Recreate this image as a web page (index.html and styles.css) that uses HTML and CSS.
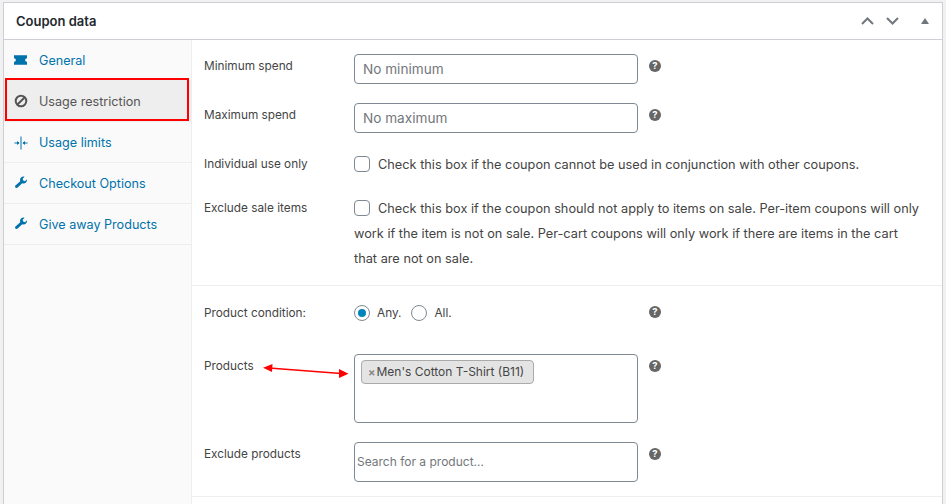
FILE: index.html
```html
<!DOCTYPE html>
<html lang="en">
<head>
    <meta charset="UTF-8">
    <title>Coupon data</title>
    <link rel="stylesheet" href="styles.css">
</head>
<body>
<div id="wrap">
    <div class="panel">
        <header class="panel-head">
            <h2>Coupon data</h2>
            <div class="head-icons">
                <svg width="13" height="8" viewBox="0 0 13 8"><path d="M1 7 L6.5 1.5 L12 7" fill="none" stroke="#72777c" stroke-width="2"/></svg>
                <svg width="13" height="8" viewBox="0 0 13 8"><path d="M1 1 L6.5 6.5 L12 1" fill="none" stroke="#72777c" stroke-width="2"/></svg>
                <svg class="tri" width="8" height="6" viewBox="0 0 8 6"><path d="M4 0 L8 6 L0 6 Z" fill="#72777c"/></svg>
            </div>
        </header>
        <div class="panel-body">
            <ul class="tabs">
                <li class="tab"><a href="#">
                    <svg class="ico-ticket" width="14" height="12" viewBox="0 0 14 12"><path d="M0 1 H14 V4 A2 2 0 0 0 14 8 V11 H0 V8 A2 2 0 0 0 0 4 Z" fill="#0073aa"/></svg>
                    General</a></li>
                <li class="tab active"><a href="#">
                    <svg class="ico-ban" width="14" height="14" viewBox="0 0 14 14"><circle cx="7" cy="7" r="5.3" fill="none" stroke="#555" stroke-width="2"/><path d="M3.2 10.8 L10.8 3.2" stroke="#555" stroke-width="2"/></svg>
                    Usage restriction</a></li>
                <li class="tab"><a href="#">
                    <svg width="14" height="14" viewBox="0 0 14 14"><path d="M7 0.5 V13.5" stroke="#0073aa" stroke-width="1"/><path d="M0.5 7 H5 M13.5 7 H9" stroke="#0073aa" stroke-width="1"/><path d="M5.5 7 L3 5 V9 Z M8.5 7 L11 5 V9 Z" fill="#0073aa"/></svg>
                    Usage limits</a></li>
                <li class="tab"><a href="#">
                    <svg class="ico-wrench" width="14" height="14" viewBox="0 0 14 14"><path d="M2 13 L1 12 L1.2 10.8 L6.2 6.2 C5.6 4.2 6.6 2 9.2 1.6 L10.6 1.8 L8.6 3.8 L9.2 5.6 L11 6.2 L13 4.2 C13.3 7.2 11 9 8.2 8.2 L3.4 12.8 Z" fill="#0073aa"/></svg>
                    Checkout Options</a></li>
                <li class="tab"><a href="#">
                    <svg class="ico-wrench" width="14" height="14" viewBox="0 0 14 14"><path d="M2 13 L1 12 L1.2 10.8 L6.2 6.2 C5.6 4.2 6.6 2 9.2 1.6 L10.6 1.8 L8.6 3.8 L9.2 5.6 L11 6.2 L13 4.2 C13.3 7.2 11 9 8.2 8.2 L3.4 12.8 Z" fill="#0073aa"/></svg>
                    Give away Products</a></li>
            </ul>
            <div class="tab-box"></div>

            <div class="content">
                <section class="group group-one">
                    <div class="row row-input">
                        <label>Minimum spend</label>
                        <div class="field"><input type="text" placeholder="No minimum"></div>
                        <span class="help">?</span>
                    </div>
                    <div class="row row-input">
                        <label>Maximum spend</label>
                        <div class="field"><input type="text" placeholder="No maximum"></div>
                        <span class="help">?</span>
                    </div>
                    <div class="row row-check">
                        <label>Individual use only</label>
                        <div class="check-text"><span class="check"></span>Check this box if the coupon cannot be used in conjunction with other coupons.</div>
                    </div>
                    <div class="row row-check row-long">
                        <label>Exclude sale items</label>
                        <div class="check-text"><span class="check"></span>Check this box if the coupon should not apply to items on sale. Per-item coupons will only work if the item is not on sale. Per-cart coupons will only work if there are items in the cart that are not on sale.</div>
                    </div>
                </section>

                <section class="group group-two">
                    <div class="row row-radio">
                        <label>Product condition:</label>
                        <div class="field radios">
                            <span class="radio on"></span><span class="radio-text">Any.</span>
                            <span class="radio"></span><span class="radio-text">All.</span>
                        </div>
                        <span class="help">?</span>
                    </div>
                    <div class="row row-products">
                        <label>Products</label>
                        <div class="field multi"><span class="chip"><b>×</b>Men's Cotton T-Shirt (B11)</span></div>
                        <span class="help">?</span>
                    </div>
                    <div class="row row-exclude">
                        <label>Exclude products</label>
                        <div class="field"><input class="search" type="text" placeholder="Search for a product…"></div>
                        <span class="help">?</span>
                    </div>
                </section>
            </div>
            <!-- red arrow over the form -->
            <svg class="arrow" width="86" height="16" viewBox="0 0 86 16"><path d="M6 5 L78 10.5" stroke="#f00" stroke-width="1.7"/><path d="M0 4.7 L9.5 1 L9 9 Z M85.5 10.7 L76 6 L76 15 Z" fill="#f00"/></svg>
        </div>
    </div>
</div>
</body>
</html>
```

FILE: styles.css
```css
* {margin: 0; padding: 0; box-sizing: border-box;}
li {list-style: none;}
a {text-decoration: none;}

body {background-color: #f1f1f1; font-family: "Inter", "Liberation Sans", sans-serif; font-size: 12px; color: #444;}

#wrap {width: 946px; height: 504px; padding: 2px 3px 0 3px; overflow: hidden;}

.panel {width: 940px; height: 520px; background-color: #fff; border: 1px solid #ccd0d4;}

.panel-head {height: 37px; display: flex; justify-content: space-between; align-items: center;
    padding: 0 13px 0 12px; border-bottom: 1px solid #ccd0d4;}
.panel-head h2 {font-size: 13px; font-weight: 600; color: #23282d;}
.head-icons {display: flex; align-items: center; gap: 12px; margin-top: -1px;}
.head-icons .tri {margin-left: 10px;}

.panel-body {display: flex; position: relative; height: 480px;}

/* left tabs */
.tabs {width: 188px; flex-shrink: 0; background-color: #fafafa; border-right: 1px solid #eee;}
.tab {height: 41px; border-bottom: 1px solid #eee;}
.tab a {display: flex; align-items: center; gap: 11px; height: 40px; padding: 2px 0 0 10px; color: #0073aa;
    font-size: 12.6px; line-height: 1;}
.tab svg {flex-shrink: 0;}
.tab .ico-ticket {width: 13px; margin-right: 1px; margin-top: -2px;}
.tab .ico-ban {margin-top: -2px;}
.tab .ico-wrench {margin-top: -4px;}
.tab.active a {background-color: #eee; color: #555;}
.tab-box {position: absolute; top: 38px; left: 1px; width: 184px; height: 43px; border: 2px solid #f00;}

/* right side */
.content {flex: 1; font-size: 11.8px;}
.group {border-bottom: 1px solid #eee;}
.group-one {height: 246px; padding-top: 14px;}
.group-two {height: 211px; padding-top: 14px;}

.row {display: flex; padding-left: 12px; position: relative;}
.row label {width: 150px; flex-shrink: 0; color: #444; line-height: 16px;}
.field {width: 284px; flex-shrink: 0;}
.field input {display: block; width: 100%; height: 30px; padding: 0 8px 1px; border: 1px solid #7e8993; border-radius: 4px;
    background: #fff; font-family: inherit; font-size: 13.6px; color: #32373c;}
.field input::placeholder {color: #72777c;}
.field input.search {height: 40px; padding: 0 2px 1px; font-size: 12px;}

.help {width: 12px; height: 12px; margin: 6px 0 0 11px; border-radius: 50%; background-color: #666; color: #fff;
    font-size: 9.5px; font-weight: 700; line-height: 12px; text-align: center;}

.row-input {height: 49px;}
.row-input label {padding-top: 4px;}
.row-check label {padding-top: 4px;}
.row-check {height: 44px;}
.row-long {height: auto;}
.check-text {flex: 1; padding-right: 20px; font-size: 12.75px; line-height: 25px; color: #444;}
.check {display: inline-block; width: 16px; height: 16px; margin-right: 8px; vertical-align: -3px;
    border: 1px solid #7e8993; border-radius: 4px; background: #fff;}

.row-radio {height: 54px;}
.row-radio label {padding-top: 5px;}
.radios {display: flex; align-items: center; height: 16px; line-height: 16px; margin-top: 5px;}
.radio {width: 16px; height: 16px; border: 1px solid #7e8993; border-radius: 50%; background: #fff; position: relative;}
.radio.on::after {content: ""; position: absolute; top: 3px; left: 3px; width: 8px; height: 8px; border-radius: 50%; background-color: #0085ba;}
.radio-text {margin: 0 10px 0 7px; font-size: 11.8px;}

.row-products {height: 88px;}
.row-products label {padding-top: 4px;}
.multi {height: 69px; border: 1px solid #7e8993; border-radius: 4px; padding: 5px 6px;}
.chip {display: inline-block; height: 24px; line-height: 22px; padding: 0 9px 0 6px; background-color: #e4e4e4;
    border: 1px solid #aaa; border-radius: 4px; font-size: 12px; color: #444;}
.chip b {margin-right: 1px; color: #888; font-size: 11px;}

.row-exclude label {padding-top: 4px;}

.arrow {position: absolute; top: 323px; left: 259px;}
```
